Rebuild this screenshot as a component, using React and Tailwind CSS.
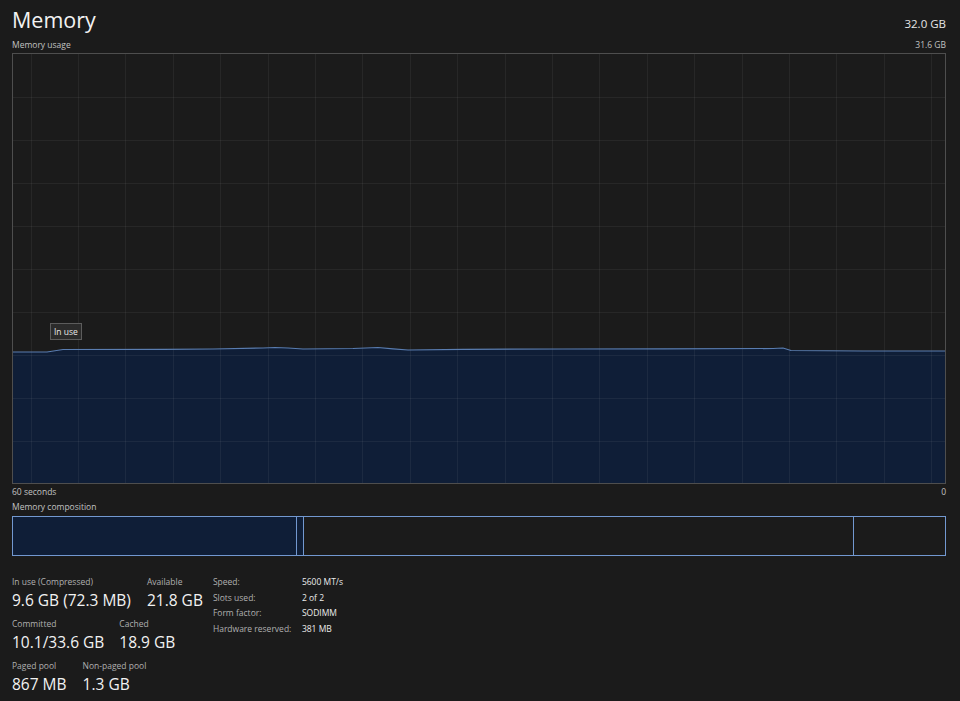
import React from "react";

const FONT = { fontFamily: '"Open Sans", "Noto Sans", sans-serif' };

const pts = [
  [0, 298], [34, 298], [50, 295.5], [150, 295.3], [200, 295], [250, 294], [262, 293.5],
  [275, 294], [290, 295], [340, 294.5], [365, 293.5], [380, 294.8], [395, 296],
  [450, 295.3], [550, 295], [650, 294.8], [760, 294.5], [770, 294], [778, 296.5],
  [850, 297], [932, 297],
];

function Graph() {
  const W = 932;
  const H = 429;
  const line = pts.map((p, i) => `${i ? "L" : "M"}${p[0]} ${p[1]}`).join(" ");
  const area = `${line} L${W} ${H} L0 ${H} Z`;
  const vx = Array.from({ length: 20 }, (_, k) => 17.5 + k * 47.4);
  const hy = Array.from({ length: 9 }, (_, k) => 42.5 + k * 43);
  return (
    <svg width={W} height={H} viewBox={`0 0 ${W} ${H}`} className="block">
      <path d={area} fill="#0f1e37" />
      {vx.map((x) => (
        <line key={"v" + x} x1={Math.round(x) + 0.5} x2={Math.round(x) + 0.5} y1="0" y2={H} stroke="#ffffff" strokeOpacity="0.055" />
      ))}
      {hy.map((y) => (
        <line key={"h" + y} x1="0" x2={W} y1={Math.round(y) + 0.5} y2={Math.round(y) + 0.5} stroke="#ffffff" strokeOpacity="0.055" />
      ))}
      <path d={line} fill="none" stroke="#5a7db0" strokeWidth="1.2" />
    </svg>
  );
}

function Stat({ label, value }) {
  return (
    <div className="flex flex-col">
      <div className="text-[8.5px] leading-[12px] text-[#b0b0b0] whitespace-nowrap">{label}</div>
      <div className="mt-[3px] text-[15.5px] leading-[18px] text-[#f2f2f2] whitespace-nowrap">{value}</div>
    </div>
  );
}

export default function App() {
  return (
    <div className="w-[960px] h-[701px] bg-[#1b1b1b] pl-[12px] pr-[14px] overflow-hidden" style={FONT}>
      {/* header */}
      <div className="flex justify-between items-baseline pt-[5px] h-[37px]">
        <div className="text-[21.5px] leading-[30px] text-[#f2f2f2]">Memory</div>
        <div className="text-[11.5px] leading-[16px] text-[#e6e6e6]">32.0 GB</div>
      </div>
      <div className="flex justify-between items-center h-[16px] text-[8.5px] text-[#c2c2c2]">
        <span>Memory usage</span>
        <span>31.6 GB</span>
      </div>
      {/* graph */}
      <div className="relative w-[934px] h-[431px] border border-[#4e4e4e]">
        <Graph />
        <div className="absolute left-[37px] top-[269px] h-[17px] px-[3px] border border-[#5c5c5c] bg-[#2b2b2b] text-[8.5px] leading-[15px] text-[#e8e8e8]">
          In use
        </div>
      </div>
      <div className="flex justify-between items-center h-[14px] mt-[1px] text-[8.5px] text-[#c2c2c2]">
        <span>60 seconds</span>
        <span>0</span>
      </div>
      <div className="flex items-center h-[14px] mt-[1px] text-[8.5px] text-[#c2c2c2]">Memory composition</div>
      {/* composition */}
      <div className="mt-[2px] w-[934px] h-[40px] border border-[#7298d0] flex">
        <div className="w-[283px] h-full bg-[#0f1e37]" />
        <div className="w-[8px] h-full bg-[#0f1e37] border-l border-r border-[#7298d0]" />
        <div className="flex-1 h-full" />
        <div className="w-[92px] h-full border-l border-[#7298d0]" />
      </div>
      {/* stats */}
      <div className="flex mt-[20px]">
        <div className="flex flex-col">
          <div className="flex gap-[16px]">
            <Stat label="In use (Compressed)" value="9.6 GB (72.3 MB)" />
            <Stat label="Available" value="21.8 GB" />
          </div>
          <div className="flex gap-[15px] mt-[9px]">
            <Stat label="Committed" value="10.1/33.6 GB" />
            <Stat label="Cached" value="18.9 GB" />
          </div>
          <div className="flex gap-[16px] mt-[9px]">
            <Stat label="Paged pool" value="867 MB" />
            <Stat label="Non-paged pool" value="1.3 GB" />
          </div>
        </div>
        <div className="ml-[10px] -mt-[2px] grid grid-cols-[89px_auto] text-[8.5px] leading-[15.5px] self-start">
          <span className="text-[#b0b0b0]">Speed:</span>
          <span className="text-[#ececec]">5600 MT/s</span>
          <span className="text-[#b0b0b0]">Slots used:</span>
          <span className="text-[#ececec]">2 of 2</span>
          <span className="text-[#b0b0b0]">Form factor:</span>
          <span className="text-[#ececec]">SODIMM</span>
          <span className="text-[#b0b0b0]">Hardware reserved:</span>
          <span className="text-[#ececec]">381 MB</span>
        </div>
      </div>
    </div>
  );
}
